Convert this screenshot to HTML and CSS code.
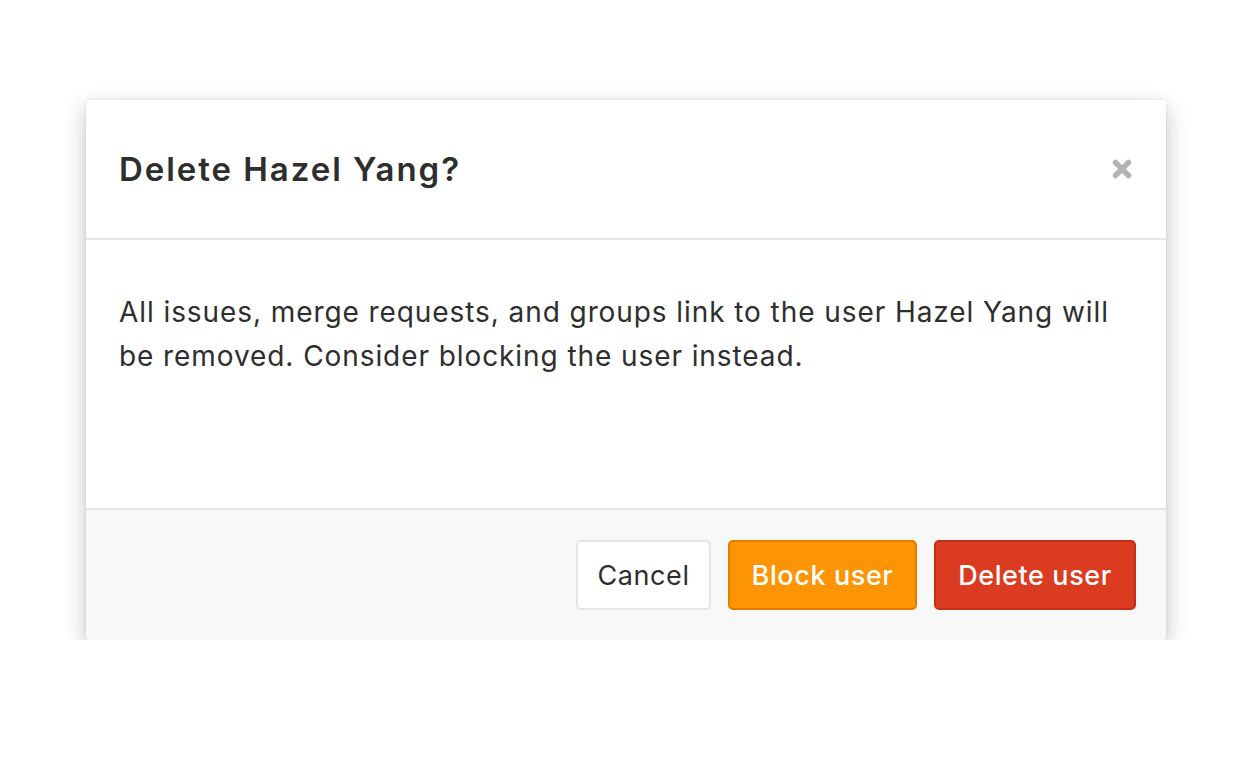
FILE: index.html
```html
<!DOCTYPE html>
<html>
<head>
<meta charset="utf-8">
<link rel="stylesheet" href="styles.css">
</head>
<body>
<div class="page">
  <div class="modal">
    <div class="modal-header">
      <h1 class="title">Delete Hazel Yang?</h1>
      <button class="close" aria-label="Close">
        <svg width="22" height="22" viewBox="0 0 22 22"><path d="M4.5 4.5 L17.5 17.5 M17.5 4.5 L4.5 17.5" stroke="#b3b3b3" stroke-width="5.5" stroke-linecap="round"/></svg>
      </button>
    </div>
    <div class="modal-body">
      <p>All issues, merge requests, and groups link to the user Hazel Yang will be removed. Consider blocking the user instead.</p>
    </div>
    <div class="modal-footer">
      <button class="btn btn-default">Cancel</button>
      <button class="btn btn-warning">Block user</button>
      <button class="btn btn-danger">Delete user</button>
    </div>
  </div>
</div>
</body>
</html>
```
FILE: styles.css
```css
html, body {
  margin: 0;
  padding: 0;
  background: #fff;
}
.page {
  padding: 100px 86px 0 86px;
}
.modal {
  width: 1080px;
  background: #fff;
  border-radius: 4px;
  box-shadow: 0 8px 22px rgba(0,0,0,0.24), 0 0 3px rgba(0,0,0,0.1);
  font-family: Inter, "Noto Sans", sans-serif;
  color: #2e2e2e;
  overflow: hidden;
}
.modal-header {
  border-bottom: 2px solid #e5e5e5;
  display: flex;
  align-items: center;
  justify-content: space-between;
  padding: 0 33px;
  box-sizing: border-box;
  height: 140px;
}
.title {
  margin: 0;
  font-size: 33px;
  font-weight: 600;
  color: #2e2e2e;
  letter-spacing: 1.95px;
}
.close {
  border: 0;
  background: none;
  padding: 0;
  display: flex;
  margin-right: 0;
}
.modal-body {
  padding: 50px 33px 0 33px;
  box-sizing: border-box;
  border-bottom: 2px solid #e5e5e5;
  height: 270px;
}
.modal-body p {
  margin: 0;
  font-size: 28px;
  line-height: 44px;
  letter-spacing: 0.92px;
  color: #2e2e2e;
}
.modal-footer {
  background: #f8f8f8;
  height: 130px;
  display: flex;
  align-items: center;
  justify-content: flex-end;
  gap: 17px;
  padding: 0 30px;
  box-sizing: border-box;
}
.btn {
  height: 70px;
  border-radius: 5px;
  font-family: Inter, sans-serif;
  font-size: 27px;
  letter-spacing: 0.6px;
  padding: 0;
  border: 2px solid;
  box-sizing: border-box;
}
.btn-default {
  background: #fff;
  border-color: #e5e5e5;
  color: #2e2e2e;
  width: 135px;
}
.btn-warning {
  background: #fc9403;
  border-color: #e47c00;
  color: #fff;
  font-weight: 500;
  width: 189px;
}
.btn-danger {
  background: #db3b21;
  border-color: #c52f18;
  color: #fff;
  font-weight: 500;
  width: 202px;
}
```
